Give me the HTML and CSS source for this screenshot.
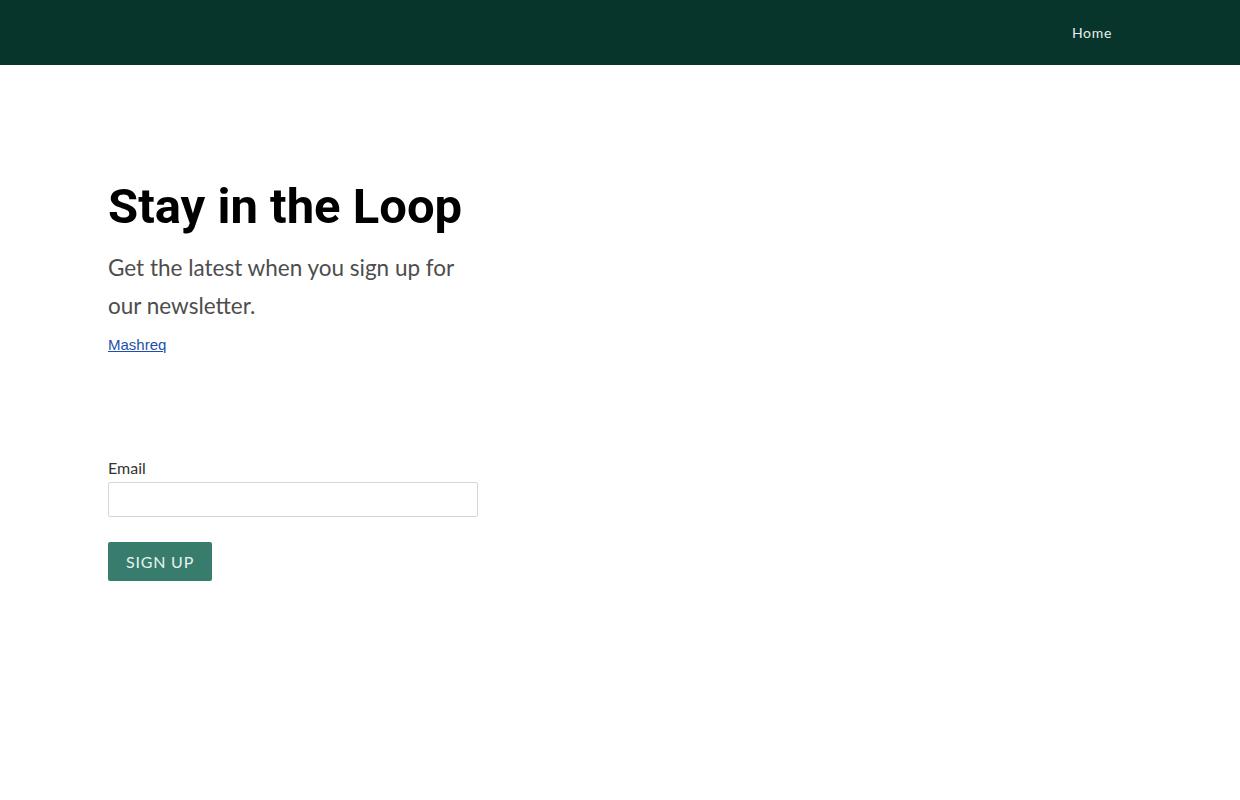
FILE: index.html
```html
<!DOCTYPE html>
<html>
  <head>
    <meta name="viewport" content="width=device-width, initial-scale=1" />
    <link rel="stylesheet" href="styles.css">
  </head>
  <body>
    <nav class="topbar">
      <a class="nav_link" href="#">Home</a>
    </nav>

    <main class="signup">
      <h1 class="signup_title">Stay in the Loop</h1>
      <p class="signup_lead">Get the latest when you sign up for our newsletter.</p>
      <a class="signup_source" href="#">Mashreq</a>

      <form class="signup_form" onsubmit="return false">
        <label class="field_label" for="email">Email</label>
        <input class="field_input" type="email" id="email" />
        <button class="signup_button" type="submit">Sign up</button>
      </form>
    </main>
  </body>
</html>
```

FILE: styles.css
```css
body {
  margin: 0;
  background-color: #ffffff;
  font-family: "Lato", "Open Sans", sans-serif;
  color: #333333;
}

.topbar {
  display: flex;
  justify-content: flex-end;
  align-items: center;
  height: 65px;
  padding: 0 128px 0 0;
  background-color: #07352b;
}

.nav_link {
  font-size: 14px;
  font-weight: 400;
  letter-spacing: 0.7px;
  color: #e8efed;
  text-decoration: none;
}

.signup {
  padding: 112px 108px 0;
  width: 380px;
}

.signup_title {
  margin: 0;
  font-family: "Roboto", sans-serif;
  font-weight: 700;
  font-size: 49px;
  line-height: 60px;
  color: #000000;
}

.signup_lead {
  margin: 12px 0 0;
  width: 360px;
  font-family: "Lato", sans-serif;
  font-size: 22.5px;
  line-height: 38px;
  color: #4d4d4d;
}

.signup_source {
  display: inline-block;
  margin-top: 11px;
  font-family: "Liberation Sans", Arial, sans-serif;
  font-size: 15px;
  color: #1d4fae;
}

.signup_form {
  display: flex;
  flex-direction: column;
  align-items: flex-start;
  margin-top: 105px;
}

.field_label {
  font-size: 16px;
  line-height: 20px;
  color: #333333;
  margin-bottom: 4px;
}

.field_input {
  box-sizing: border-box;
  width: 370px;
  height: 35px;
  border: 1px solid #d6d6d6;
  border-radius: 2px;
  padding: 0 8px;
  font-size: 16px;
}

.signup_button {
  margin-top: 25px;
  width: 104px;
  height: 39px;
  border: none;
  border-radius: 2px;
  background-color: #387c6d;
  color: #e6f4ef;
  font-family: "Lato", sans-serif;
  font-size: 16px;
  letter-spacing: 0.8px;
  text-transform: uppercase;
  cursor: pointer;
}
```
